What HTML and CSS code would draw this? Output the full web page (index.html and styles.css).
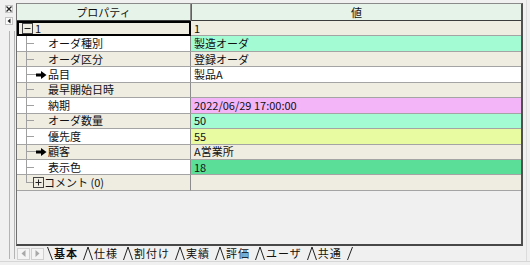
FILE: index.html
```html
<!DOCTYPE html>
<html lang="ja">
<head>
    <meta charset="UTF-8">
    <title>プロパティ</title>
    <link rel="stylesheet" href="styles.css">
</head>
<body>
    <div class="window">
        <!-- 左側の折りたたみパネル -->
        <div class="side">
            <span class="mini-btn"><svg width="6" height="6" viewBox="0 0 6 6"><path d="M0.5 0.5L5.5 5.5M5.5 0.5L0.5 5.5" stroke="#222" stroke-width="1.3"/></svg></span>
            <span class="mini-btn"><svg width="6" height="6" viewBox="0 0 6 6"><path d="M4.5 0.5L1.5 3L4.5 5.5Z" fill="#222"/></svg></span>
            <div class="rail"></div>
        </div>

        <div class="main">
            <!-- プロパティグリッド -->
            <div class="grid">
                <div class="row head">
                    <div class="c1">プロパティ</div>
                    <div class="c2">値</div>
                </div>
                <div class="row shade">
                    <div class="c1 focus"><span class="twig root"><svg width="11" height="11" viewBox="0 0 11 11"><rect x="0.5" y="0.5" width="10" height="10" fill="none" stroke="#444"/><path d="M2.5 5.5H8.5" stroke="#222"/></svg></span>1</div>
                    <div class="c2">1</div>
                </div>
                <div class="row plain">
                    <div class="c1"><span class="twig"></span>オーダ種別</div>
                    <div class="c2 teal">製造オーダ</div>
                </div>
                <div class="row shade">
                    <div class="c1"><span class="twig"></span>オーダ区分</div>
                    <div class="c2">登録オーダ</div>
                </div>
                <div class="row plain">
                    <div class="c1"><span class="twig ref"><svg width="11" height="8" viewBox="0 0 11 8"><path d="M0 2.5H5V0L10.5 4L5 8V5.5H0Z" fill="#000"/></svg></span>品目</div>
                    <div class="c2">製品A</div>
                </div>
                <div class="row shade">
                    <div class="c1"><span class="twig"></span>最早開始日時</div>
                    <div class="c2"></div>
                </div>
                <div class="row plain">
                    <div class="c1"><span class="twig"></span>納期</div>
                    <div class="c2 pink">2022/06/29 17:00:00</div>
                </div>
                <div class="row shade">
                    <div class="c1"><span class="twig"></span>オーダ数量</div>
                    <div class="c2 teal">50</div>
                </div>
                <div class="row plain">
                    <div class="c1"><span class="twig"></span>優先度</div>
                    <div class="c2 lime">55</div>
                </div>
                <div class="row shade">
                    <div class="c1"><span class="twig ref"><svg width="11" height="8" viewBox="0 0 11 8"><path d="M0 2.5H5V0L10.5 4L5 8V5.5H0Z" fill="#000"/></svg></span>顧客</div>
                    <div class="c2">A営業所</div>
                </div>
                <div class="row plain">
                    <div class="c1"><span class="twig"></span>表示色</div>
                    <div class="c2 green">18</div>
                </div>
                <div class="row shade">
                    <div class="c1"><span class="twig last"><svg width="11" height="11" viewBox="0 0 11 11"><rect x="0.5" y="0.5" width="10" height="10" fill="none" stroke="#444"/><path d="M2.5 5.5H8.5M5.5 2.5V8.5" stroke="#222"/></svg></span>コメント (0)</div>
                    <div class="c2"></div>
                </div>
            </div>

            <!-- シートタブ -->
            <div class="tabs">
                <span class="scroll"><svg width="5" height="7" viewBox="0 0 5 7"><path d="M4.5 0L0.5 3.5L4.5 7Z" fill="#a8a8a8"/></svg></span>
                <span class="scroll"><svg width="5" height="7" viewBox="0 0 5 7"><path d="M0.5 0L4.5 3.5L0.5 7Z" fill="#a8a8a8"/></svg></span>
                <svg class="slant first" width="6" height="13" viewBox="0 0 6 13"><path d="M0.5 0L5.5 13" stroke="#222"/></svg>
                <span class="tab active">基本</span>
                <svg class="slant" width="10" height="13" viewBox="0 0 10 13"><path d="M0.5 13L5 0L9.5 13" fill="none" stroke="#222"/></svg>
                <span class="tab">仕様</span>
                <svg class="slant" width="10" height="13" viewBox="0 0 10 13"><path d="M0.5 13L5 0L9.5 13" fill="none" stroke="#222"/></svg>
                <span class="tab">割付け</span>
                <svg class="slant" width="10" height="13" viewBox="0 0 10 13"><path d="M0.5 13L5 0L9.5 13" fill="none" stroke="#222"/></svg>
                <span class="tab">実績</span>
                <svg class="slant" width="10" height="13" viewBox="0 0 10 13"><path d="M0.5 13L5 0L9.5 13" fill="none" stroke="#222"/></svg>
                <span class="tab">評価</span>
                <svg class="slant" width="10" height="13" viewBox="0 0 10 13"><path d="M0.5 13L5 0L9.5 13" fill="none" stroke="#222"/></svg>
                <span class="tab">ユーザ</span>
                <svg class="slant" width="10" height="13" viewBox="0 0 10 13"><path d="M0.5 13L5 0L9.5 13" fill="none" stroke="#222"/></svg>
                <span class="tab">共通</span>
                <svg class="slant" width="6" height="13" viewBox="0 0 6 13"><path d="M5.5 0L0.5 13" stroke="#222"/></svg>
            </div>
        </div>

        <div class="edge"></div>
    </div>
</body>
</html>
```

FILE: styles.css
```css
* {
    margin: 0;
    padding: 0;
    box-sizing: border-box;
}

body {
    width: 530px;
    height: 265px;
    overflow: hidden;
    background-color: #f0f0f0;
    font-family: "Noto Sans CJK JP", "Liberation Sans", sans-serif;
    font-size: 11px;
    color: #111;
}

.window {
    display: flex;
    height: 262px;
    border-bottom: 1px solid #d6d6d6;
}

/* 左側のパネル */
.side {
    width: 16px;
    display: flex;
    flex-direction: column;
    align-items: flex-start;
    padding: 5px 0 2px 5px;
}

.mini-btn {
    display: flex;
    align-items: center;
    justify-content: center;
    width: 8px;
    height: 8px;
    margin-bottom: 4px;
    background: #fbfbfb;
    border: 1px solid #c4c4c4;
}

.rail {
    flex: 1;
    width: 6px;
    margin: 2px 0 0 4px;
    border-left: 1px solid #b4b4b4;
    border-right: 1px solid #b4b4b4;
}

/* メイン領域 */
.main {
    width: 507px;
    margin-top: 3px;
    display: flex;
    flex-direction: column;
}

.grid {
    flex: 1;
    background: #f0f0f0;
    border-left: 1px solid #707070;
    border-top: 1px solid #8a8a8a;
    border-right: 2px solid #505050;
    border-bottom: 2px solid #484848;
}

.row {
    display: grid;
    grid-template-columns: 174px 1fr;
    height: 15.45px;
}

.row > div {
    display: flex;
    align-items: center;
    line-height: 1;
    white-space: nowrap;
    overflow: hidden;
    border-bottom: 1px solid #a4a4a4;
}

.c1 {
    border-right: 1px solid #8c8c8c;
}

.c2 {
    padding-left: 3px;
}

.row.head {
    height: 17px;
}

.row.head > div {
    justify-content: center;
    background: #e5f3e8;
    border-bottom: 1px solid #3c3c3c;
    padding-left: 0;
}

.row.head .c2 {
    border-left: 1px solid #606060;
}

.shade > div {
    background: #efece2;
}

.plain > div {
    background: #ffffff;
}

.c2.teal {
    background: #a3fbd4;
}

.c2.pink {
    background: #f4b4f8;
}

.c2.lime {
    background: #e9fba0;
}

.c2.green {
    background: #5bdf98;
}

.focus {
    outline: 2px solid #000;
    outline-offset: -2px;
}

/* ツリーの線 */
.twig {
    align-self: stretch;
    display: flex;
    align-items: center;
    justify-content: flex-end;
    width: 31px;
    flex-shrink: 0;
    background:
        linear-gradient(#a0a0a0, #a0a0a0) 9px 0 / 1px 100% no-repeat,
        linear-gradient(#a0a0a0, #a0a0a0) 9px 50% / 8px 1px no-repeat;
}

.twig.root {
    width: 18px;
    justify-content: flex-start;
    padding-left: 5px;
    background: linear-gradient(#a0a0a0, #a0a0a0) 9px 100% / 1px 2px no-repeat;
}

.twig.ref {
    background:
        linear-gradient(#a0a0a0, #a0a0a0) 9px 0 / 1px 100% no-repeat,
        linear-gradient(#a0a0a0, #a0a0a0) 9px 50% / 11px 1px no-repeat;
}

.twig.ref svg {
    margin-right: 1px;
}

.twig.last {
    width: 27px;
    background:
        linear-gradient(#a0a0a0, #a0a0a0) 9px 0 / 1px 50% no-repeat,
        linear-gradient(#a0a0a0, #a0a0a0) 9px 50% / 7px 1px no-repeat;
}

/* シートタブ */
.tabs {
    display: flex;
    align-items: center;
    height: 15px;
    padding-left: 1px;
}

.scroll {
    display: flex;
    align-items: center;
    justify-content: center;
    width: 13px;
    height: 12px;
    margin-right: 1px;
    background: #f4f4f4;
    border: 1px solid #d0d0d0;
}

.slant {
    flex-shrink: 0;
}

.slant.first {
    margin-left: 2px;
}

.tab {
    padding: 0 5px 0 1px;
    letter-spacing: 1px;
    line-height: 1;
}

.tab.active {
    font-weight: bold;
}

.edge {
    flex: 1;
    margin-left: 3px;
    border-left: 1px solid #dcdcdc;
}
```
